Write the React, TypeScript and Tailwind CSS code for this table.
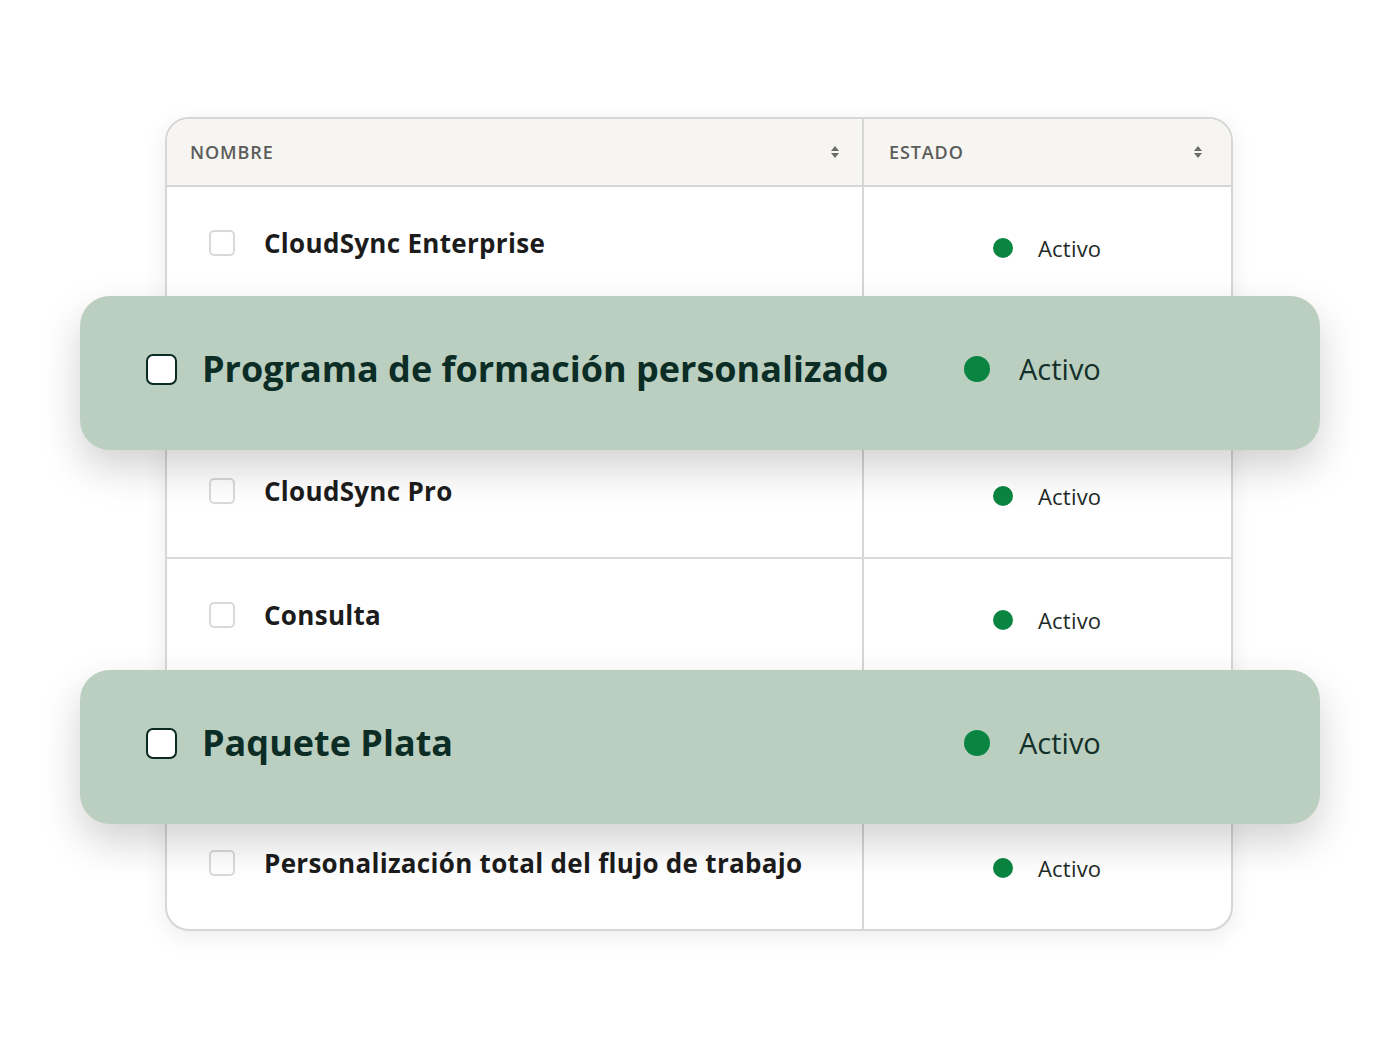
import React from "react"

interface Row {
  name: string
  status: string
  featured?: boolean
}

const rows: Row[] = [
  { name: "CloudSync Enterprise", status: "Activo" },
  { name: "Programa de formación personalizado", status: "Activo", featured: true },
  { name: "CloudSync Pro", status: "Activo" },
  { name: "Consulta", status: "Activo" },
  { name: "Paquete Plata", status: "Activo", featured: true },
  { name: "Personalización total del flujo de trabajo", status: "Activo" },
]

function SortIcon() {
  return (
    <svg width="10" height="18" viewBox="0 0 10 18" className="text-[#6b6b6b]">
      <path d="M5 3 L9 8 H1 Z" fill="currentColor" />
      <path d="M5 15 L9 10 H1 Z" fill="currentColor" />
    </svg>
  )
}

function FeaturedRow({ row, top }: { row: Row; top: string }) {
  return (
    <div
      className={`absolute ${top} -left-[85px] -right-[87px] h-[154px] rounded-[30px] bg-[#bacfbf] shadow-[0_18px_40px_rgba(0,0,0,0.18)] flex items-center`}
    >
      <div className="flex items-center w-[783px] pl-[66px] pb-[8px]">
        <span className="w-[31px] h-[31px] rounded-[7px] border-2 border-[#0c2a24] bg-white shrink-0"></span>
        <span className="ml-[25px] text-[36px] font-bold text-[#0c2d26] whitespace-nowrap">
          {row.name}
        </span>
      </div>
      <div className="flex items-center pl-[101px] pb-[8px]">
        <span className="w-[26px] h-[26px] rounded-full bg-[#0a8541]"></span>
        <span className="ml-[29px] text-[29px] text-[#13302a]">{row.status}</span>
      </div>
    </div>
  )
}

export default function App() {
  return (
    <div className="min-h-[1050px] w-[1400px] bg-white pt-[117px] pl-[165px] font-['Open_Sans',sans-serif]">
      <div className="relative w-[1068px]">
        <div className="rounded-[24px] border-2 border-[#d6d6d4] bg-white overflow-hidden shadow-[0_6px_24px_rgba(0,0,0,0.08)]">
          <div className="flex h-[68px] bg-[#f6f5f1] border-b-2 border-[#d6d6d4]">
            <div className="w-[697px] flex items-center justify-between pl-[23px] pr-[22px] border-r-2 border-[#d6d6d4]">
              <span className="text-[18px] font-semibold tracking-[0.9px] text-[#5c5c5a]">NOMBRE</span>
              <SortIcon />
            </div>
            <div className="flex-1 flex items-center justify-between pl-[25px] pr-[28px]">
              <span className="text-[18px] font-semibold tracking-[0.9px] text-[#5c5c5a]">ESTADO</span>
              <SortIcon />
            </div>
          </div>
          {rows.map((row, i) => (
            <div
              key={row.name}
              className={`flex ${i < rows.length - 1 ? "h-[124px] border-b-2 border-[#dadad8]" : "h-[122px]"}`}
            >
              <div className="w-[697px] flex items-center pl-[42px] pb-[10px] border-r-2 border-[#d6d6d4]">
                <span className="w-[26px] h-[26px] rounded-[5px] border-2 border-[#d9d9d9] bg-white shrink-0"></span>
                <span className="ml-[29px] text-[26px] font-bold tracking-[0.3px] text-[#1c1c1c] whitespace-nowrap">{row.name}</span>
              </div>
              <div className="flex-1 flex items-center pl-[129px]">
                <span className="w-[20px] h-[20px] rounded-full bg-[#0a8541]"></span>
                <span className="ml-[25px] text-[22px] tracking-[0.2px] text-[#1d2b27]">{row.status}</span>
              </div>
            </div>
          ))}
        </div>
        <FeaturedRow row={rows[1]} top="top-[179px]" />
        <FeaturedRow row={rows[4]} top="top-[553px]" />
      </div>
    </div>
  )
}
